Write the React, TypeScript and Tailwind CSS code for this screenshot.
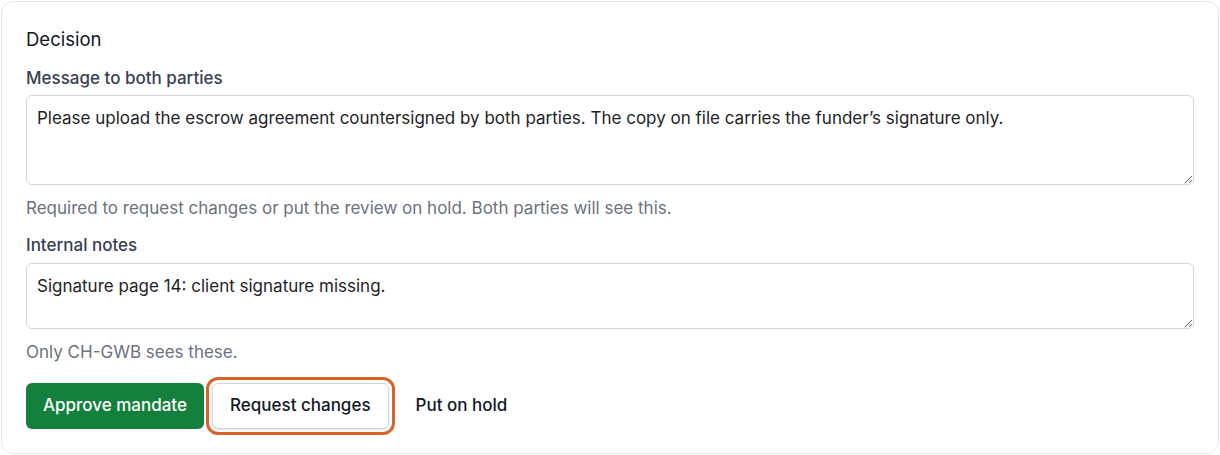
import { useState } from 'react'

const Field = ({
  label,
  value,
  onChange,
  hint,
  height,
  spacing,
}: {
  label: string
  value: string
  onChange: (v: string) => void
  hint: string
  height: string
  spacing: string
}) => (
  <div className={spacing}>
    <label className="block text-[17px] leading-6 font-medium text-[#374151]">{label}</label>
    <textarea
      value={value}
      onChange={(e) => onChange(e.target.value)}
      className={`mt-[5px] block w-full ${height} rounded-md border border-[#d4d6db] bg-white px-2.5 py-2.5 text-[17px] leading-6 text-[#1f2328] outline-none`}
    />
    <p className="mt-[11px] text-[17px] leading-6 text-[#6b7280]">{hint}</p>
  </div>
)

export default function App() {
  const [message, setMessage] = useState(
    'Please upload the escrow agreement countersigned by both parties. The copy on file carries the funder\u2019s signature only.'
  )
  const [notes, setNotes] = useState('Signature page 14: client signature missing.')

  return (
    <div className="min-h-screen bg-white p-px font-['Inter','Liberation_Sans',sans-serif]">
      <section className="rounded-xl border border-[#e4e6ea] bg-white p-6">
        <h2 className="text-[18.5px] leading-[26px] font-normal text-[#111827]">Decision</h2>

        <Field
          spacing="mt-[14px]"
          label="Message to both parties"
          value={message}
          onChange={setMessage}
          hint="Required to request changes or put the review on hold. Both parties will see this."
          height="h-[90px]"
        />
        <Field
          spacing="mt-[13px]"
          label="Internal notes"
          value={notes}
          onChange={setNotes}
          hint="Only CH-GWB sees these."
          height="h-[66px] !mt-[6px]"
        />

        <div className="mt-[19px] flex items-center gap-2">
          <button className="h-[46px] rounded-md bg-[#13803e] px-[17px] text-[17px] font-medium text-white">
            Approve mandate
          </button>
          <button className="h-[46px] rounded-md border border-[#d4d6db] bg-white px-[17px] text-[17px] font-medium text-[#111827] shadow-sm outline-[3px] outline-offset-[3px] outline-[#d9622b] outline-solid">
            Request changes
          </button>
          <button className="h-[46px] rounded-md px-[19px] text-[17px] font-medium text-[#111827]">
            Put on hold
          </button>
        </div>
      </section>
    </div>
  )
}
